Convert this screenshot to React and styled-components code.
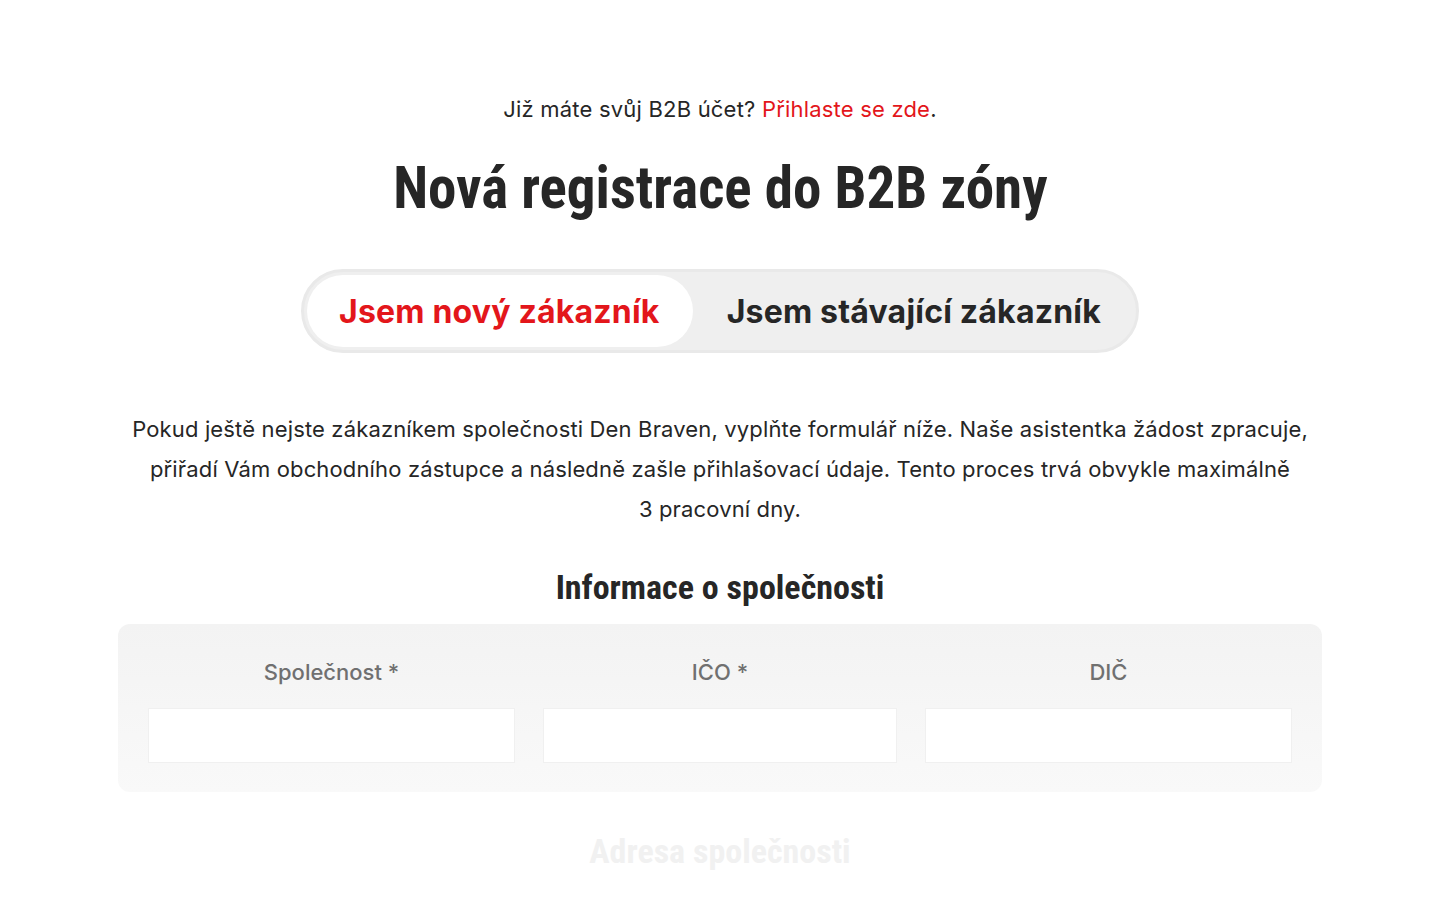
import React, { useState } from 'react';
import styled, { createGlobalStyle } from 'styled-components';

const Global = createGlobalStyle`
  html, body {
    margin: 0;
    padding: 0;
    background: #fff;
  }
  body {
    font-family: Inter, "Noto Sans", "Liberation Sans", sans-serif;
    color: #262626;
  }
`;

const Page = styled.div`
  width: 1440px;
  height: 900px;
  overflow: hidden;
  display: flex;
  flex-direction: column;
  align-items: center;
  padding-top: 94px;
  box-sizing: border-box;
`;

const LoginNote = styled.p`
  margin: 0;
  font-size: 22px;
  line-height: 30px;
  letter-spacing: 0.2px;
  color: #262626;
  a {
    color: #e3161b;
    text-decoration: none;
  }
`;

const Title = styled.h1`
  margin: 28px 0 0;
  font-family: "Roboto Condensed", Roboto, "Liberation Sans", sans-serif;
  font-weight: 700;
  font-size: 60px;
  line-height: 72px;
  color: #262626;
  span {
    display: inline-block;
    transform: scaleX(0.95);
  }
`;

const Switch = styled.div`
  margin-top: 45px;
  display: flex;
  align-items: center;
  padding: 3px;
  border: 3px solid #e9e9e9;
  background: #efefef;
  border-radius: 42px;
`;

const Tab = styled.button`
  border: none;
  cursor: pointer;
  font-family: Inter, "Noto Sans", sans-serif;
  font-weight: 700;
  font-size: 32px;
  letter-spacing: 0.2px;
  height: 72px;
  border-radius: 36px;
  padding: ${p => (p.$active ? '0 33px 0 32px' : '0 32px 0 34px')};
  background: ${p => (p.$active ? '#fff' : 'transparent')};
  color: ${p => (p.$active ? '#e3161b' : '#262626')};
`;

const Intro = styled.p`
  margin: 56px 0 0;
  width: 1240px;
  text-align: center;
  font-size: 22px;
  letter-spacing: 0.15px;
  line-height: 40px;
  color: #262626;
`;

const SectionTitle = styled.h2`
  margin: ${p => (p.$faded ? '37px' : '36px')} 0 0;
  font-family: "Roboto Condensed", Roboto, "Liberation Sans", sans-serif;
  font-weight: 700;
  font-size: 34px;
  line-height: 44px;
  color: ${p => (p.$faded ? '#f1f1f1' : '#262626')};
`;

const Card = styled.div`
  margin-top: 15px;
  width: 1204px;
  box-sizing: border-box;
  padding: 30px 30px 29px;
  border-radius: 12px;
  background: linear-gradient(#f3f3f3, #f9f9f9);
  display: grid;
  grid-template-columns: 367px 354px 367px;
  column-gap: 28px;
`;

const Field = styled.label`
  display: flex;
  flex-direction: column;
  align-items: stretch;
`;

const Label = styled.span`
  text-align: center;
  font-size: 22px;
  font-weight: 500;
  line-height: 36px;
  color: #707070;
  margin-bottom: 18px;
`;

const Input = styled.input`
  height: 55px;
  border: 1px solid #f0f0f0;
  background: #fff;
  box-sizing: border-box;
  outline: none;
  font-size: 18px;
  padding: 0 14px;
`;

export default function App() {
  const [tab, setTab] = useState('new');
  return (
    <>
      <Global />
      <Page>
        <LoginNote>
          Již máte svůj B2B účet? <a href="#login">Přihlaste se zde</a>.
        </LoginNote>
        <Title><span>Nová registrace do B2B zóny</span></Title>
        <Switch>
          <Tab $active={tab === 'new'} onClick={() => setTab('new')}>Jsem nový zákazník</Tab>
          <Tab $active={tab === 'existing'} onClick={() => setTab('existing')}>Jsem stávající zákazník</Tab>
        </Switch>
        <Intro>
          Pokud ještě nejste zákazníkem společnosti Den Braven, vyplňte formulář níže. Naše asistentka žádost zpracuje,
          <br />
          přiřadí Vám obchodního zástupce a následně zašle přihlašovací údaje. Tento proces trvá obvykle maximálně
          <br />
          3&nbsp;pracovní dny.
        </Intro>
        <SectionTitle>Informace o společnosti</SectionTitle>
        <Card>
          <Field>
            <Label>Společnost *</Label>
            <Input />
          </Field>
          <Field>
            <Label>IČO *</Label>
            <Input />
          </Field>
          <Field>
            <Label>DIČ</Label>
            <Input />
          </Field>
        </Card>
        <SectionTitle $faded>Adresa společnosti</SectionTitle>
      </Page>
    </>
  );
}
